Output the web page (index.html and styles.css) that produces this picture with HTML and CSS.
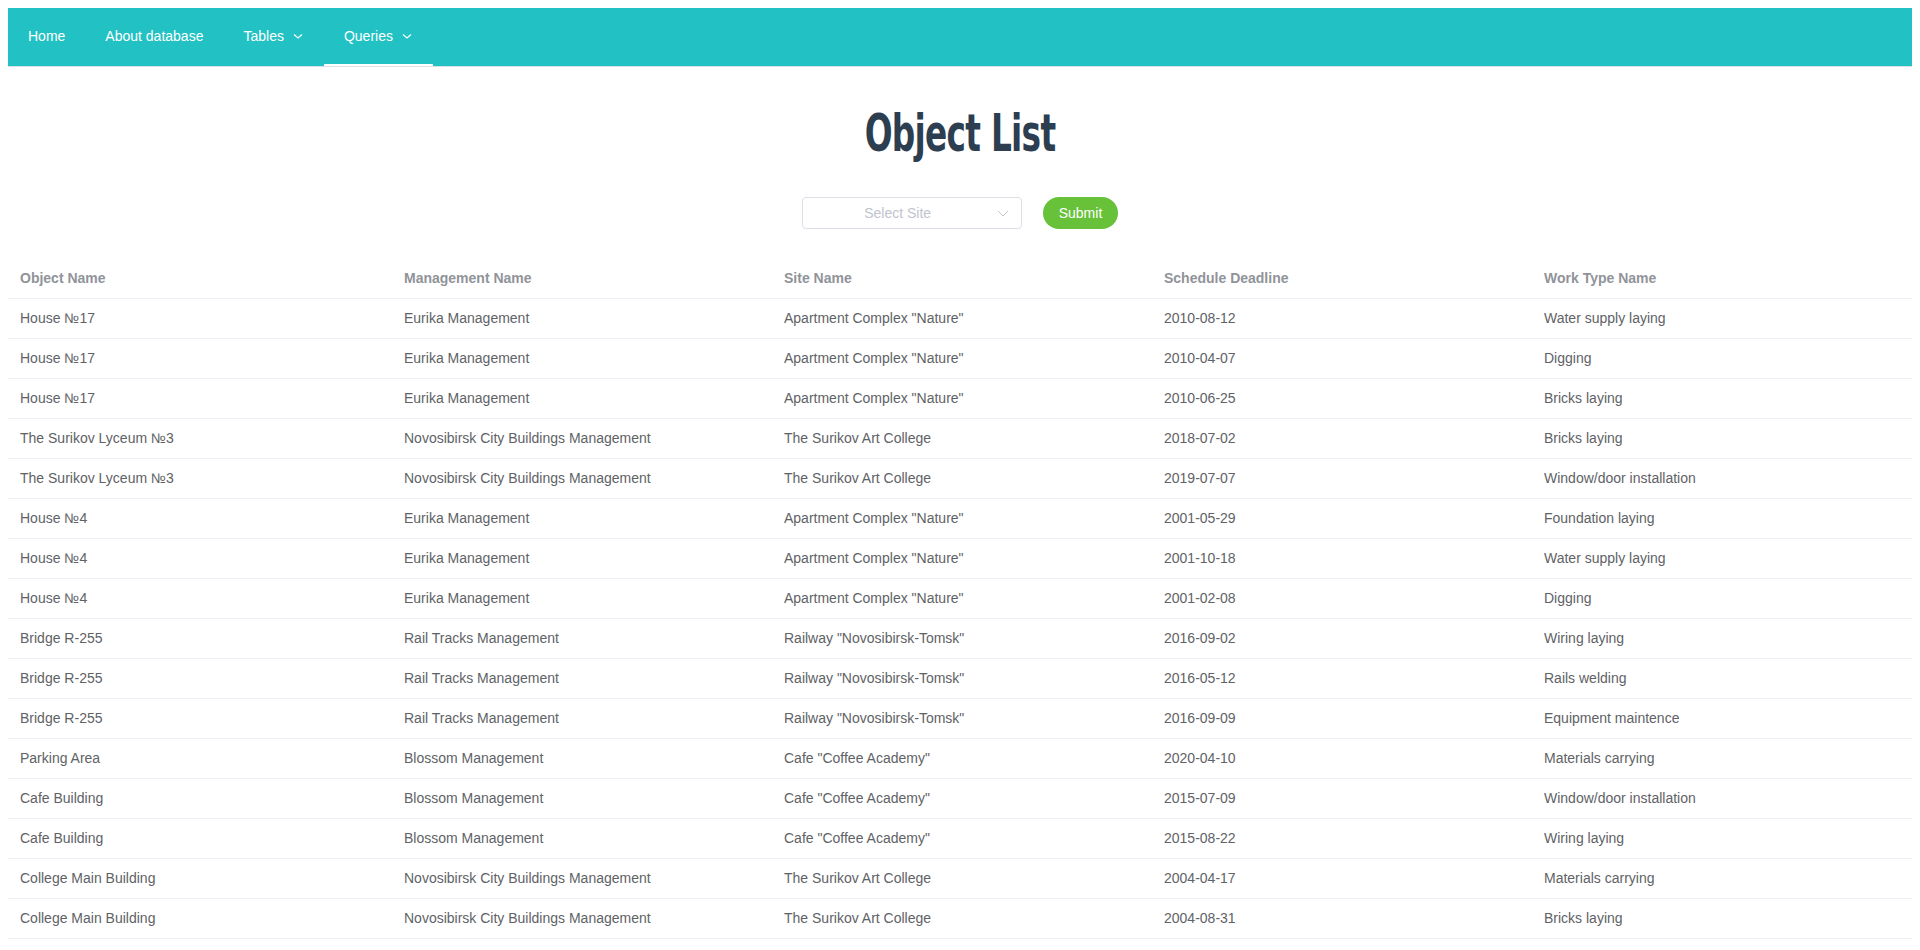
FILE: index.html
```html
<!DOCTYPE html>
<html lang="en">
<head>
<meta charset="utf-8">
<title>Object List</title>
<link rel="stylesheet" href="styles.css">
</head>
<body>
<nav class="menu">
  <a class="menu-item">Home</a>
  <a class="menu-item">About database</a>
  <a class="menu-item">Tables <svg class="arrow" width="12" height="12" viewBox="0 0 12 12"><path d="M2 4.5 L6 8 L10 4.5" fill="none" stroke="#fff" stroke-width="1.1"/></svg></a>
  <a class="menu-item active">Queries <svg class="arrow" width="12" height="12" viewBox="0 0 12 12"><path d="M2 4.5 L6 8 L10 4.5" fill="none" stroke="#fff" stroke-width="1.1"/></svg></a>
</nav>

<h1 class="title">Object List</h1>

<div class="controls">
  <div class="select">
    <span class="placeholder">Select Site</span>
    <svg class="select-arrow" width="14" height="14" viewBox="0 0 14 14"><path d="M2 5 L7 10 L12 5" fill="none" stroke="#c0c4cc" stroke-width="1"/></svg>
  </div>
  <button class="btn">Submit</button>
</div>

<table class="data">
  <colgroup>
    <col class="col-first"><col class="col"><col class="col"><col class="col"><col class="col">
  </colgroup>
  <thead>
    <tr><th>Object Name</th><th>Management Name</th><th>Site Name</th><th>Schedule Deadline</th><th>Work Type Name</th></tr>
  </thead>
  <tbody>
    <tr><td>House №17</td><td>Eurika Management</td><td>Apartment Complex "Nature"</td><td>2010-08-12</td><td>Water supply laying</td></tr>
    <tr><td>House №17</td><td>Eurika Management</td><td>Apartment Complex "Nature"</td><td>2010-04-07</td><td>Digging</td></tr>
    <tr><td>House №17</td><td>Eurika Management</td><td>Apartment Complex "Nature"</td><td>2010-06-25</td><td>Bricks laying</td></tr>
    <tr><td>The Surikov Lyceum №3</td><td>Novosibirsk City Buildings Management</td><td>The Surikov Art College</td><td>2018-07-02</td><td>Bricks laying</td></tr>
    <tr><td>The Surikov Lyceum №3</td><td>Novosibirsk City Buildings Management</td><td>The Surikov Art College</td><td>2019-07-07</td><td>Window/door installation</td></tr>
    <tr><td>House №4</td><td>Eurika Management</td><td>Apartment Complex "Nature"</td><td>2001-05-29</td><td>Foundation laying</td></tr>
    <tr><td>House №4</td><td>Eurika Management</td><td>Apartment Complex "Nature"</td><td>2001-10-18</td><td>Water supply laying</td></tr>
    <tr><td>House №4</td><td>Eurika Management</td><td>Apartment Complex "Nature"</td><td>2001-02-08</td><td>Digging</td></tr>
    <tr><td>Bridge R-255</td><td>Rail Tracks Management</td><td>Railway "Novosibirsk-Tomsk"</td><td>2016-09-02</td><td>Wiring laying</td></tr>
    <tr><td>Bridge R-255</td><td>Rail Tracks Management</td><td>Railway "Novosibirsk-Tomsk"</td><td>2016-05-12</td><td>Rails welding</td></tr>
    <tr><td>Bridge R-255</td><td>Rail Tracks Management</td><td>Railway "Novosibirsk-Tomsk"</td><td>2016-09-09</td><td>Equipment maintence</td></tr>
    <tr><td>Parking Area</td><td>Blossom Management</td><td>Cafe "Coffee Academy"</td><td>2020-04-10</td><td>Materials carrying</td></tr>
    <tr><td>Cafe Building</td><td>Blossom Management</td><td>Cafe "Coffee Academy"</td><td>2015-07-09</td><td>Window/door installation</td></tr>
    <tr><td>Cafe Building</td><td>Blossom Management</td><td>Cafe "Coffee Academy"</td><td>2015-08-22</td><td>Wiring laying</td></tr>
    <tr><td>College Main Building</td><td>Novosibirsk City Buildings Management</td><td>The Surikov Art College</td><td>2004-04-17</td><td>Materials carrying</td></tr>
    <tr><td>College Main Building</td><td>Novosibirsk City Buildings Management</td><td>The Surikov Art College</td><td>2004-08-31</td><td>Bricks laying</td></tr>
  </tbody>
</table>
</body>
</html>
```

FILE: styles.css
```css
body {
  margin: 8px;
  font-family: "Liberation Sans", Arial, sans-serif;
  font-size: 14px;
  color: #606266;
  background: #fff;
}

.menu {
  display: flex;
  background: #22c1c3;
  height: 58px;
  border-bottom: 1px solid #dcdfe6;
}

.menu-item {
  display: flex;
  align-items: center;
  height: 58px;
  box-sizing: border-box;
  padding: 0 20px;
  color: #fff;
  font-size: 14px;
  border-bottom: 2px solid transparent;
  cursor: pointer;
}

.menu-item.active {
  border-bottom-color: #fff;
}

.arrow {
  margin-left: 8px;
}

.title {
  margin: 35px 0 33px;
  text-align: center;
  font-family: "DejaVu Sans Condensed", sans-serif;
  font-weight: bold;
  font-size: 52px;
  line-height: 62px;
  color: #2c3e50;
  letter-spacing: -1px;
  transform: scaleX(0.7);
}

.controls {
  display: flex;
  justify-content: center;
  align-items: center;
  gap: 21px;
  margin-bottom: 30px;
}

.select {
  position: relative;
  width: 220px;
  height: 32px;
  box-sizing: border-box;
  border: 1px solid #dcdfe6;
  border-radius: 4px;
  display: flex;
  align-items: center;
  justify-content: center;
  padding: 0 32px 0 4px;
}

.placeholder {
  color: #c0c4cc;
  font-size: 14px;
}

.select-arrow {
  position: absolute;
  right: 11px;
  top: 8px;
}

.btn {
  height: 32px;
  padding: 0 16px;
  border: none;
  border-radius: 16px;
  background: #67c23a;
  color: #fff;
  font-family: "Liberation Sans", Arial, sans-serif;
  font-size: 14px;
}

.data {
  width: 1904px;
  table-layout: fixed;
  border-collapse: collapse;
}

.col-first {
  width: 384px;
}

.col {
  width: 380px;
}

.data th,
.data td {
  text-align: left;
  padding: 8px 12px;
  line-height: 23px;
  border-bottom: 1px solid #ebeef5;
  font-size: 14px;
}

.data th {
  color: #909399;
  font-weight: bold;
}

.data td {
  color: #606266;
}
```
